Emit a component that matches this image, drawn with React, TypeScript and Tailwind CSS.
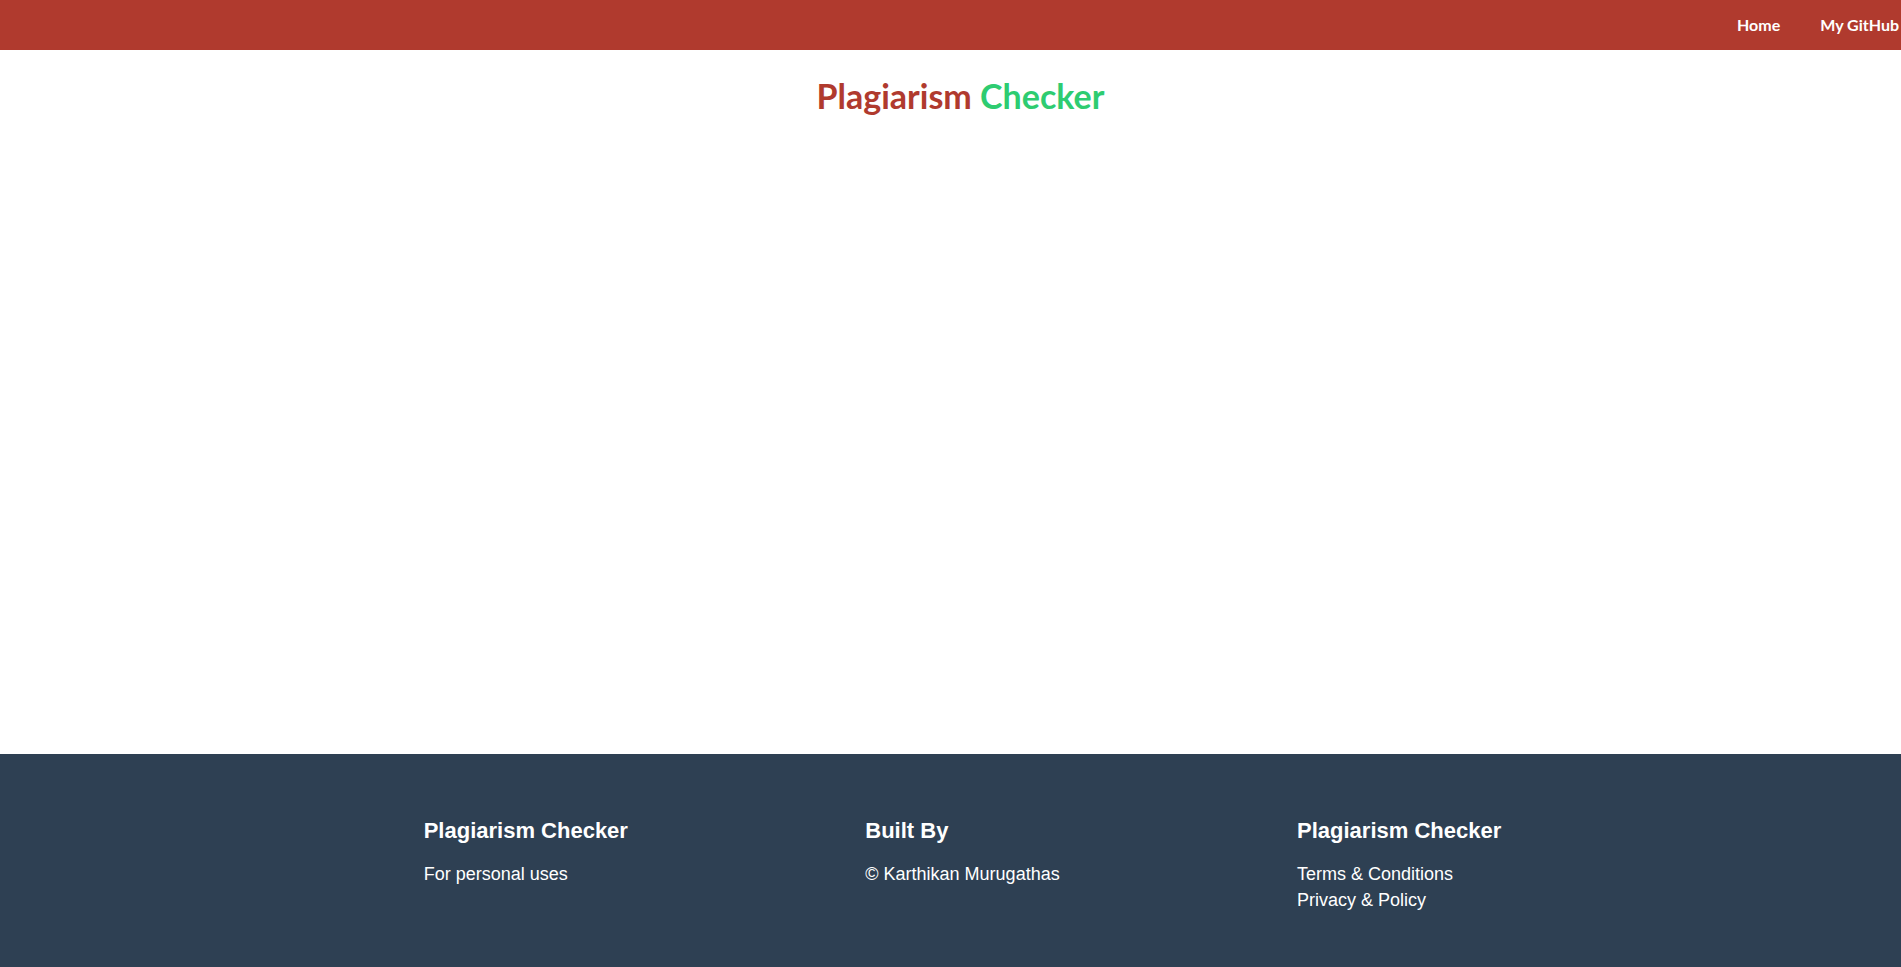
export default function App() {
  return (
    <div className="min-h-screen flex flex-col bg-white">
      <header className="h-[50px] bg-[#b03a2e] flex items-center justify-end pr-[2px]">
        <nav className="flex gap-[40px] text-[16px] font-bold text-white font-['Lato',sans-serif]">
          <a href="#">Home</a>
          <a href="#">My GitHub</a>
        </nav>
      </header>

      <main className="flex-1 pl-[20px]">
        <h1 className="mt-[26px] text-center text-[34px] leading-[40px] font-bold font-['Lato',sans-serif]">
          <span className="text-[#b03a2e]">Plagiarism</span>{" "}
          <span className="text-[#2ecc71]">Checker</span>
        </h1>
      </main>

      <footer className="bg-[#2e4053] text-white pt-[63px] pb-[54px] font-['Liberation_Sans',Arial,sans-serif]">
        <div className="w-[1339px] mx-auto pl-[24px] flex justify-around">
          <div>
            <h3 className="text-[22px] leading-[28px] font-bold mb-4">Plagiarism Checker</h3>
            <p className="text-[18px] leading-[26px]">For personal uses</p>
          </div>
          <div>
            <h3 className="text-[22px] leading-[28px] font-bold mb-4">Built By</h3>
            <p className="text-[18px] leading-[26px]">© Karthikan Murugathas</p>
          </div>
          <div>
            <h3 className="text-[22px] leading-[28px] font-bold mb-4">Plagiarism Checker</h3>
            <ul className="text-[18px] leading-[26px]">
              <li><a href="#">Terms &amp; Conditions</a></li>
              <li><a href="#">Privacy &amp; Policy</a></li>
            </ul>
          </div>
        </div>
      </footer>
    </div>
  );
}
